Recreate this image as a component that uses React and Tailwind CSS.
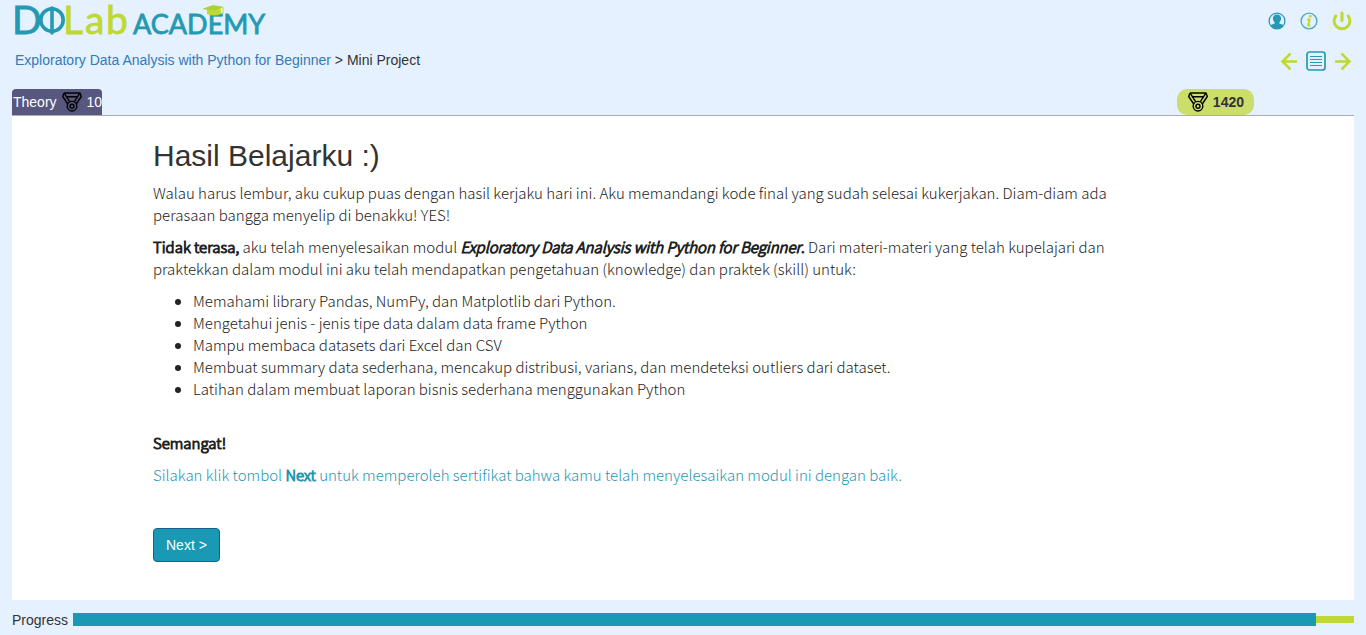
const BASE_FONT = "font-['Liberation_Sans',Arial,sans-serif]";

function Logo() {
  return (
    <svg viewBox="-3 -5 258 42" className="h-[42px] w-[258px] overflow-visible" role="img" aria-label="DQLab Academy">
      <g fontFamily="Lato, sans-serif">
        <g fill="#2599b3" stroke="#2599b3" strokeWidth="0.8">
          <text x="-3" y="29" fontSize="39">D</text>
          <text x="118" y="29" fontSize="27">ACADEMY</text>
        </g>
        <g fill="#c0d832" stroke="#c0d832" strokeWidth="0.8">
          <text x="48" y="29" fontSize="39">L</text>
          <text x="70" y="29" fontSize="39">a</text>
          <text x="91" y="29" fontSize="39">b</text>
        </g>
      </g>
      <g fill="none" stroke="#2599b3" strokeWidth="3.6" strokeLinecap="round">
        <circle cx="37" cy="15" r="11.2" />
        <path d="M37 3V28" />
      </g>
      <path d="M192 4V9Q200 12 206 9V4L199 6Z" fill="#c0d832" />
      <path d="M187 4L198 0L209 2L200 6Z" fill="#b1cf2e" />
      <path d="M208 3V9" stroke="#c0d832" strokeWidth="1" />
    </svg>
  );
}

function Medal() {
  return (
    <svg viewBox="0 0 20 20" className="size-5 shrink-0" fill="none" stroke="#000" strokeWidth="1.4" strokeLinejoin="round" aria-hidden="true">
      <path d="M2 1H18L19.300 4.500L14.300 12M2 1L0.700 4.500L5.700 12" />
      <path d="M2.300 1.300L7.600 9.700M17.700 1.300L12.400 9.700M4.500 4.800H15.500" />
      <circle cx="10" cy="14.200" r="4.800" />
      <circle cx="10" cy="14.200" r="2" />
    </svg>
  );
}

function UserIcon() {
  return (
    <svg viewBox="0 0 18 18" className="size-[18px]" aria-hidden="true">
      <circle cx="9" cy="9" r="7.900" fill="#e5f1ff" stroke="#2599b3" strokeWidth="1.300" />
      <path d="M9 2.500c2.700 0 4.100 1.700 4.100 4 0 1.500-.7 2.900-1.700 3.800v1.100l4 1.500A7.500 7.500 0 0 1 9 16.800a7.500 7.500 0 0 1-6.400-3.900l4-1.500v-1.100C5.600 9.400 4.900 8 4.900 6.500c0-2.300 1.400-4 4.100-4z" fill="#2599b3" />
    </svg>
  );
}

function InfoIcon() {
  return (
    <svg viewBox="0 0 18 18" className="size-[18px]" aria-hidden="true">
      <circle cx="9" cy="9" r="7.900" fill="none" stroke="#4babc2" strokeWidth="1.400" />
      <circle cx="10.200" cy="4.300" r="1.400" fill="#c0d832" />
      <path d="M7 7.500H9.600L8.200 13.500H10.300" fill="none" stroke="#c0d832" strokeWidth="2.100" strokeLinejoin="round" />
    </svg>
  );
}

function PowerIcon() {
  return (
    <svg viewBox="0 0 20 20" className="size-5" fill="none" stroke="#c0d832" strokeWidth="3" strokeLinecap="round" aria-hidden="true">
      <path d="M10 2V9.500M3.800 5A7.900 7.900 0 1 0 16.200 5" />
    </svg>
  );
}

function ArrowIcon({ flip }) {
  return (
    <svg viewBox="0 0 18 18" className={flip ? "size-[18px] -scale-x-100" : "size-[18px]"} fill="none" stroke="#c0d832" strokeWidth="2.500" aria-hidden="true">
      <path d="M17 9.500H3M10.500 1.500L2.500 9.500L10.500 17.500" />
    </svg>
  );
}

function ListIcon() {
  return (
    <svg viewBox="0 0 20 20" className="size-5" fill="none" stroke="#2599b3" aria-hidden="true">
      <rect x="1" y="1" width="18" height="18" rx="2.500" strokeWidth="1.700" />
      <path d="M4 5.500H16M4 8.500H16M4 11.500H16M4 14.500H16" strokeWidth="1" />
    </svg>
  );
}

function Strong({ children }) {
  return <strong className="font-light [-webkit-text-stroke:1px]">{children}</strong>;
}

const skills = [
  "Memahami library Pandas, NumPy, dan Matplotlib dari Python.",
  "Mengetahui jenis - jenis tipe data dalam data frame Python",
  "Mampu membaca datasets dari Excel dan CSV",
  "Membuat summary data sederhana, mencakup distribusi, varians, dan mendeteksi outliers dari dataset.",
  "Latihan dalam membuat laporan bisnis sederhana menggunakan Python",
];

export default function App() {
  return (
    <div className={`flex min-h-screen flex-col bg-[#e5f1ff] px-3 text-sm leading-5 text-[#333] ${BASE_FONT}`}>
      <header>
        <div className="flex h-[42px] items-center justify-between pr-0.5">
          <a href="#home"><Logo /></a>
          <nav className="flex items-center gap-3.5" aria-label="Account">
            <a href="#profile" aria-label="Profile"><UserIcon /></a>
            <a href="#info" aria-label="Information"><InfoIcon /></a>
            <a href="#logout" aria-label="Log out"><PowerIcon /></a>
          </nav>
        </div>
        <div className="flex h-[38px] items-center justify-between pr-0.5 pl-[3px]">
          <p className="pb-0.5">
            <a href="#course" className="text-[#337ab7]">Exploratory Data Analysis with Python for Beginner</a> &gt; Mini Project
          </p>
          <nav className="flex items-center gap-2" aria-label="Lesson">
            <a href="#previous" aria-label="Previous"><ArrowIcon /></a>
            <a href="#contents" aria-label="Contents"><ListIcon /></a>
            <a href="#next" aria-label="Next lesson"><ArrowIcon flip /></a>
          </nav>
        </div>
      </header>

      <div className="mt-[9px] flex items-center justify-between border-b border-[#a9a9c9]">
        <div className="flex h-[26px] items-center gap-[5px] rounded-t-[4px] bg-[#57577f] pl-px text-white">
          <span>Theory</span>
          <Medal />
          <span>10</span>
        </div>
        <div className="mr-[100px] flex h-[26px] items-center gap-[5px] rounded-[10px] bg-[#cbdd6b] pr-2.5 pl-[11px] font-bold">
          <Medal />
          <span>1420</span>
        </div>
      </div>

      <main className="flex-1 bg-white pr-[220px] pb-[38px] pl-[141px]">
        <h1 className="pt-[22px] text-[30px] leading-9">Hasil Belajarku :)</h1>
        <div className="mt-2 flex flex-col gap-2.5 font-['Noto_Sans_CJK_SC',sans-serif] text-[15px] leading-[22px] font-light text-[#222]">
          <p>
            Walau harus lembur, aku cukup puas dengan hasil kerjaku hari ini. Aku memandangi kode final yang sudah selesai kukerjakan. Diam-diam ada perasaan bangga menyelip di benakku! YES!
          </p>
          <p>
            <Strong>Tidak terasa,</Strong> aku telah menyelesaikan modul <Strong><em>Exploratory Data Analysis with Python for Beginner</em>.</Strong> Dari materi-materi yang telah kupelajari dan praktekkan dalam modul ini aku telah mendapatkan pengetahuan (knowledge) dan praktek (skill) untuk:
          </p>
          <ul className="list-disc pl-10">
            {skills.map((skill) => <li key={skill}>{skill}</li>)}
          </ul>
          <p className="mt-[22px]"><Strong>Semangat!</Strong></p>
          <p className="text-[#1f97b3]">
            Silakan klik tombol <Strong>Next</Strong> untuk memperoleh sertifikat bahwa kamu telah menyelesaikan modul ini dengan baik.
          </p>
        </div>
        <button type="button" className="mt-[42px] h-[34px] cursor-pointer rounded-[4px] border border-[#1b5e89] bg-[#1999b3] px-3 text-white">
          Next &gt;
        </button>
      </main>

      <footer className="flex h-[35px] items-center gap-[5px] pt-1">
        <span>Progress</span>
        <div className="flex flex-1 items-center" role="progressbar" aria-label="Progress" aria-valuenow={97} aria-valuemin={0} aria-valuemax={100}>
          <div className="h-[13px] bg-[#1999b3]" style={{ width: "97%" }} />
          <div className="h-[7px] flex-1 bg-[#c0d832]" />
        </div>
      </footer>
    </div>
  );
}
